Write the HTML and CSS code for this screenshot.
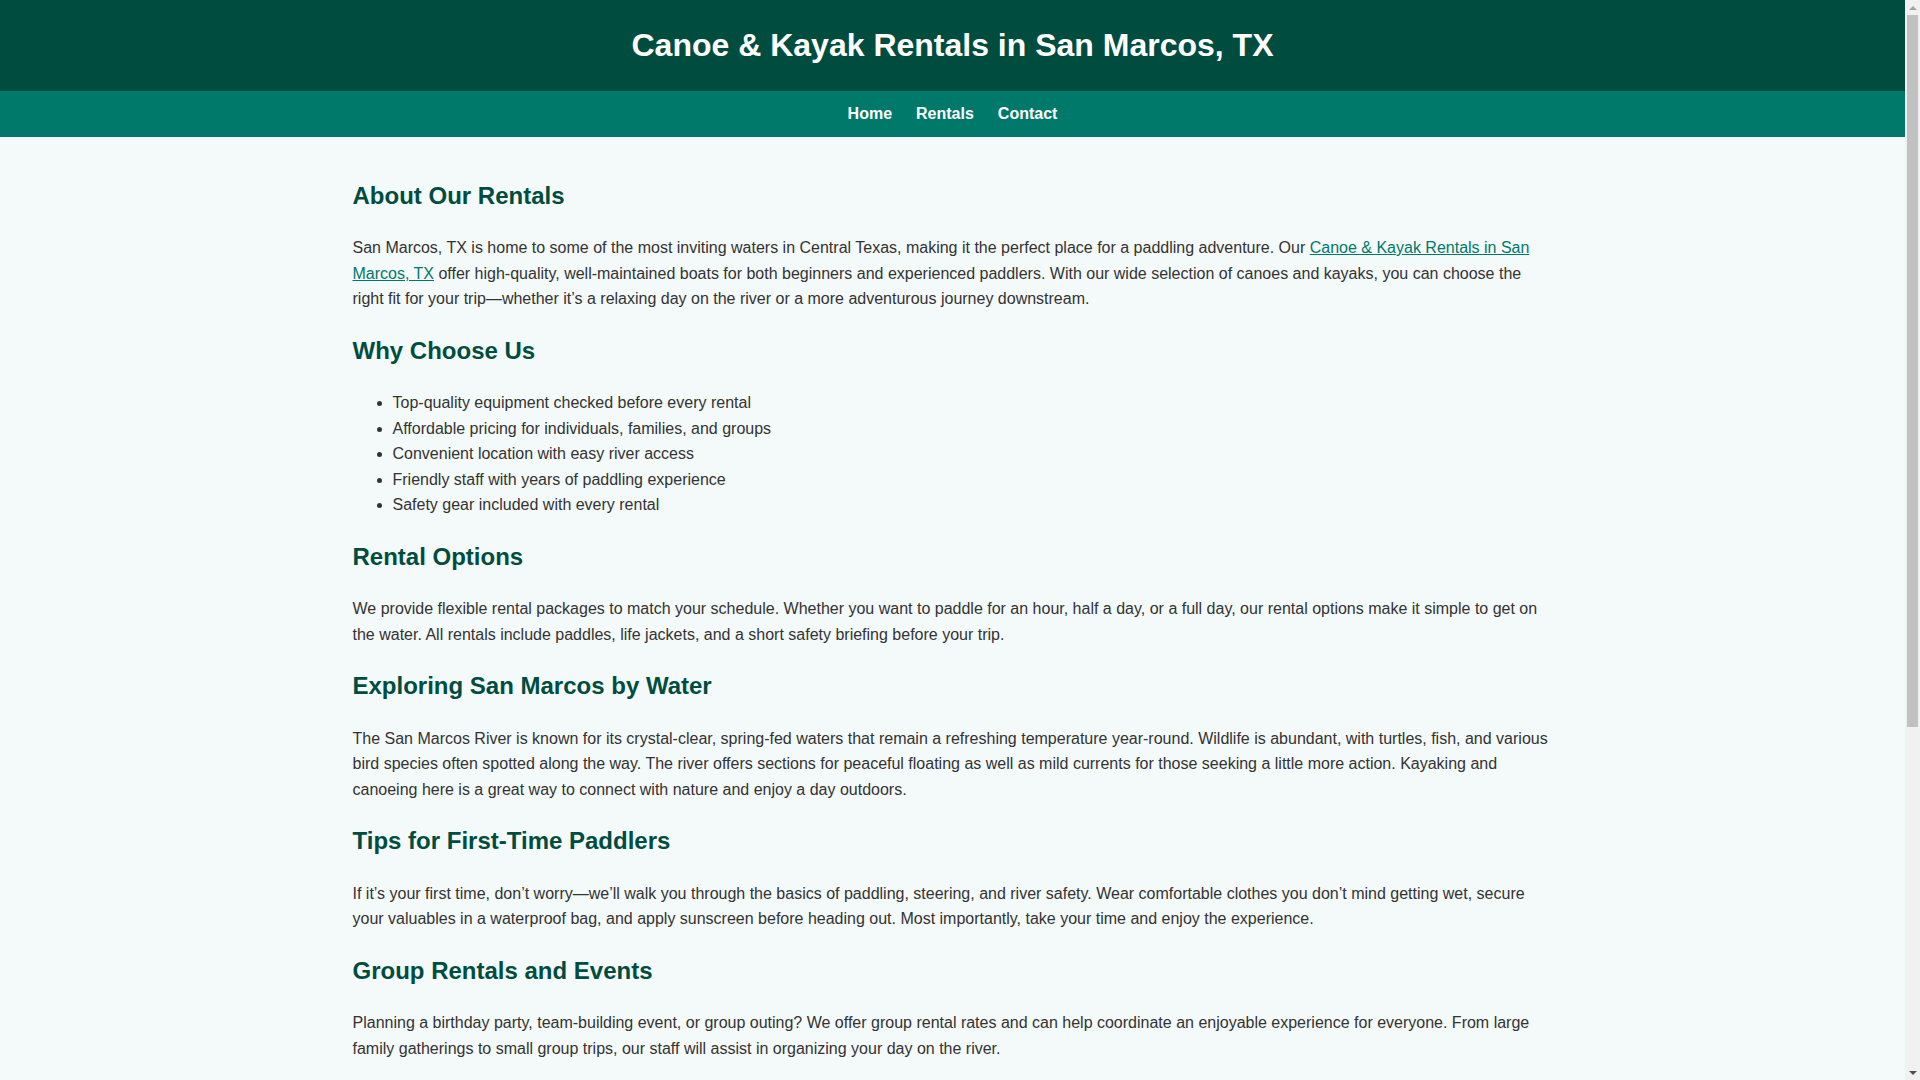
FILE: index.html
```html
<!DOCTYPE html>
<html lang="en">
<head>
<meta charset="utf-8">
<title>Canoe &amp; Kayak Rentals in San Marcos, TX</title>
<link rel="stylesheet" href="styles.css">
</head>
<body>
<div class="page">
  <header class="site-header">
    <h1 class="site-title">Canoe &amp; Kayak Rentals in San Marcos, TX</h1>
  </header>
  <nav class="site-nav">
    <a href="#" class="nav-link">Home</a>
    <a href="#" class="nav-link">Rentals</a>
    <a href="#" class="nav-link">Contact</a>
  </nav>
  <main class="content">
    <section>
      <h2>About Our Rentals</h2>
      <p>San Marcos, TX is home to some of the most inviting waters in Central Texas, making it the perfect place for a paddling adventure. Our <a href="#" class="inline-link">Canoe &amp; Kayak Rentals in San Marcos, TX</a> offer high-quality, well-maintained boats for both beginners and experienced paddlers. With our wide selection of canoes and kayaks, you can choose the right fit for your trip—whether it’s a relaxing day on the river or a more adventurous journey downstream.</p>
    </section>
    <section>
      <h2>Why Choose Us</h2>
      <ul>
        <li>Top-quality equipment checked before every rental</li>
        <li>Affordable pricing for individuals, families, and groups</li>
        <li>Convenient location with easy river access</li>
        <li>Friendly staff with years of paddling experience</li>
        <li>Safety gear included with every rental</li>
      </ul>
    </section>
    <section>
      <h2>Rental Options</h2>
      <p>We provide flexible rental packages to match your schedule. Whether you want to paddle for an hour, half a day, or a full day, our rental options make it simple to get on the water. All rentals include paddles, life jackets, and a short safety briefing before your trip.</p>
    </section>
    <section>
      <h2>Exploring San Marcos by Water</h2>
      <p>The San Marcos River is known for its crystal-clear, spring-fed waters that remain a refreshing temperature year-round. Wildlife is abundant, with turtles, fish, and various bird species often spotted along the way. The river offers sections for peaceful floating as well as mild currents for those seeking a little more action. Kayaking and canoeing here is a great way to connect with nature and enjoy a day outdoors.</p>
    </section>
    <section>
      <h2>Tips for First-Time Paddlers</h2>
      <p>If it’s your first time, don’t worry—we’ll walk you through the basics of paddling, steering, and river safety. Wear comfortable clothes you don’t mind getting wet, secure your valuables in a waterproof bag, and apply sunscreen before heading out. Most importantly, take your time and enjoy the experience.</p>
    </section>
    <section>
      <h2>Group Rentals and Events</h2>
      <p>Planning a birthday party, team-building event, or group outing? We offer group rental rates and can help coordinate an enjoyable experience for everyone. From large family gatherings to small group trips, our staff will assist in organizing your day on the river.</p>
    </section>
    <section>
      <h2>Protecting the River</h2>
      <p>We care deeply about keeping the San Marcos River clean and healthy. Please pack out everything you bring, stay on designated paths when entering and exiting the water, and avoid disturbing plants and wildlife. Together we can keep the river beautiful for generations of paddlers to come.</p>
    </section>
    <section>
      <h2>Plan Your Trip</h2>
      <p>Ready to get on the water? Reserve your canoe or kayak ahead of time to secure your spot, especially on weekends and holidays. Our team is happy to answer questions and help you plan the perfect day on the river.</p>
    </section>
    <section>
      <h2>Visit Us Today</h2>
      <p>Stop by our shop near the river or give us a call to learn more about our rentals. We look forward to helping you experience the best paddling in San Marcos, TX.</p>
    </section>
  </main>
  <footer class="site-footer">
    <p>&copy; 2024 Canoe &amp; Kayak Rentals in San Marcos, TX. All rights reserved.</p>
  </footer>
</div>
<aside class="scrollbar" aria-hidden="true">
  <span class="scroll-arrow scroll-up"></span>
  <span class="scroll-track"><span class="scroll-thumb"></span></span>
  <span class="scroll-arrow scroll-down"></span>
</aside>
</body>
</html>
```

FILE: styles.css
```css
html, body {
  margin: 0;
  padding: 0;
}

body {
  display: flex;
  align-items: flex-start;
  font-family: "Liberation Sans", Arial, sans-serif;
  font-size: 16px;
  line-height: 1.6;
  color: #333333;
  background: #f4f9f9;
}

.page {
  flex: 1;
  min-width: 0;
}

.site-header {
  background: #004d40;
  color: #ffffff;
  text-align: center;
  padding: 20px;
}

.site-title {
  margin: 0;
  font-size: 32px;
  font-weight: bold;
}

.site-nav {
  background: #00796b;
  display: flex;
  justify-content: center;
  padding: 10px 0;
}

.nav-link {
  color: #ffffff;
  text-decoration: none;
  font-weight: bold;
  margin: 0 12px;
}

.content {
  width: 1200px;
  margin: 0 auto;
  padding: 20px 0;
}

.content h2 {
  color: #004d40;
  font-size: 24px;
  margin: 0.83em 0;
}

.content p {
  margin: 16px 0;
}

.content ul {
  margin: 16px 0;
  padding-left: 40px;
}

.inline-link {
  color: #00796b;
  text-decoration: underline;
}

.site-footer {
  background: #004d40;
  color: #ffffff;
  text-align: center;
  padding: 20px;
}

.site-footer p {
  margin: 0;
}

/* window scrollbar strip */
.scrollbar {
  position: sticky;
  top: 0;
  flex: 0 0 15px;
  width: 15px;
  height: 100vh;
  background: #f1f1f1;
  display: flex;
  flex-direction: column;
  align-items: center;
}

.scroll-arrow {
  flex: 0 0 15px;
  width: 15px;
  display: flex;
  justify-content: center;
  align-items: center;
}

.scroll-up::before {
  content: "";
  border-left: 4px solid transparent;
  border-right: 4px solid transparent;
  border-bottom: 4px solid #a3a3a3;
}

.scroll-down::before {
  content: "";
  border-left: 4px solid transparent;
  border-right: 4px solid transparent;
  border-top: 4px solid #505050;
}

.scroll-track {
  flex: 1;
  width: 11px;
}

.scroll-thumb {
  display: block;
  width: 11px;
  height: 712px;
  background: #c1c1c1;
}
```
